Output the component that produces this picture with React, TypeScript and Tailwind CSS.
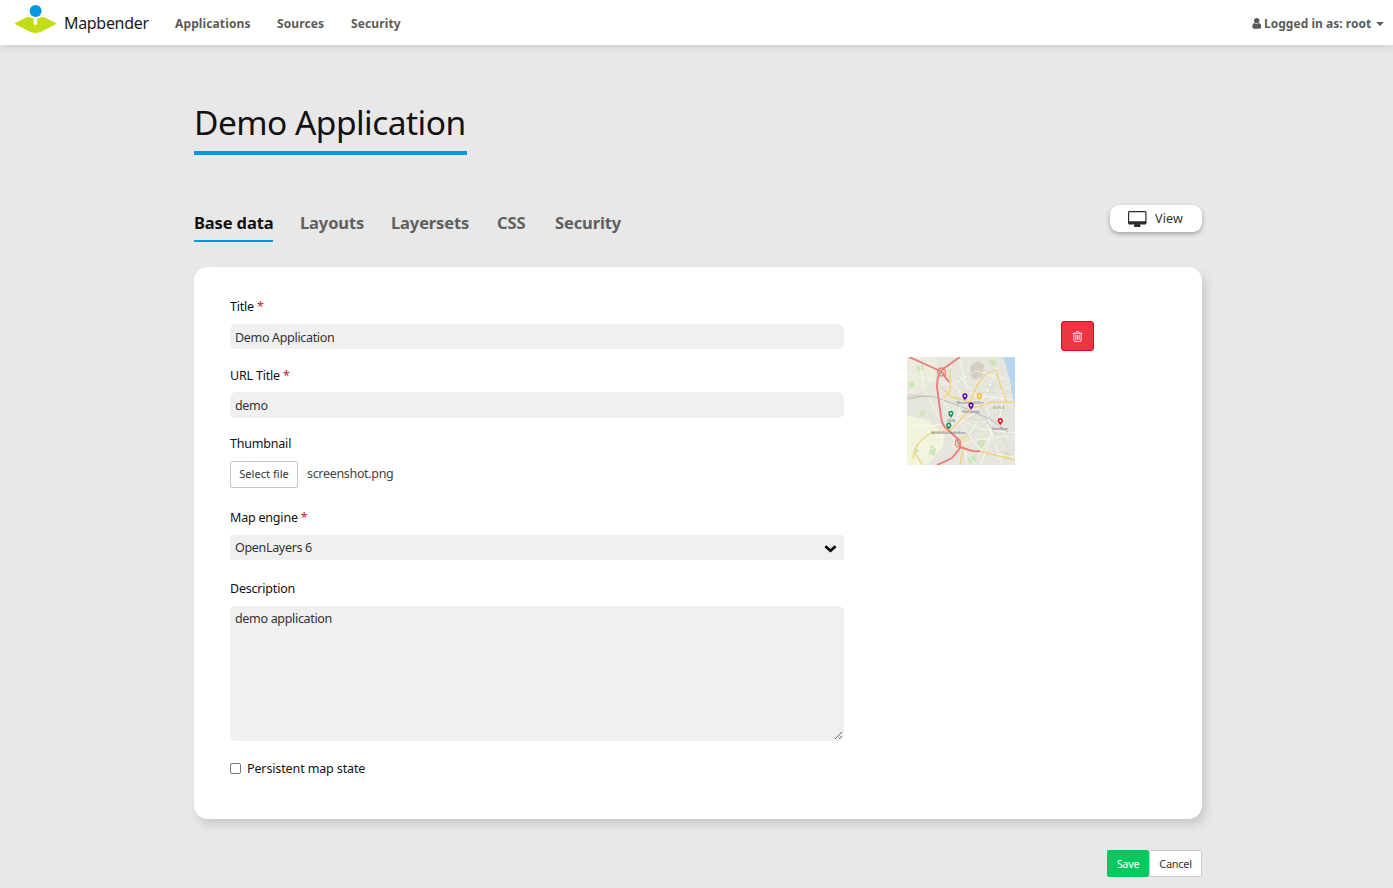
import type { ReactNode } from "react";

function Logo() {
  return (
    <svg className="h-[29px] w-[42px]" viewBox="0 0 42 29">
      <path
        d="M1 17.400 12.500 12q1-.5 2-.1 1.800 1.300 4.200 1.800v4.500a1.800 1.800 0 0 0 3.600 0v-4.500q2.400-.5 4.200-1.800 1-.4 2 .1L40 17.400q1.800 1.100 0 2.300L27.500 26q-7 4-14 0L1 19.700q-1.800-1.200 0-2.300Z"
        fill="#c3dc15"
      />
      <circle cx="20.6" cy="6" r="6" fill="#0098e5" />
    </svg>
  );
}

function UserIcon() {
  return (
    <svg className="mr-[2px] h-[11px] w-[10px]" viewBox="0 0 10 11" fill="#5b5b5b">
      <path d="M2.400 5C.9 5.300.3 6.600.3 8.700c0 1.200.8 2 1.900 2h5.100c1.100 0 1.900-.8 1.900-2C9.200 6.600 8.600 5.300 7.100 5a3.400 3.400 0 0 1-4.700 0Z" />
      <circle cx="4.750" cy="2.800" r="2.700" />
    </svg>
  );
}

function DesktopIcon() {
  return (
    <svg className="h-[16px] w-[19px]" viewBox="0 0 19 16" fill="#2c2c2c">
      <path
        fillRule="evenodd"
        d="M1.500 0h15.500A1.500 1.500 0 0 1 18.500 1.500v10.500a1.500 1.500 0 0 1-1.500 1.500h-5c0 .8.600 1.200.600 1.800 0 .4-.2.7-.6.7H6.500c-.4 0-.6-.3-.6-.7 0-.6.600-1 .6-1.800h-5A1.500 1.500 0 0 1 0 12V1.500A1.500 1.500 0 0 1 1.500 0Zm0 1.200c-.2 0-.3.1-.3.3v8.500c0 .2.1.3.3.3h15.500c.2 0 .3-.1.3-.3V1.500c0-.2-.1-.3-.3-.3Z"
      />
    </svg>
  );
}

function TrashIcon() {
  return (
    <svg className="h-[11px] w-[11px]" viewBox="0 0 11 12" fill="none" stroke="#fff" strokeWidth="1">
      <path d="M0.200 2.500h10.600M3.500 2.300l.6-1.500q.1-.3.4-.3h2q.3 0 .4.3l.6 1.500M1.500 2.500v7.700q0 1.200 1 1.200h6q1 0 1-1.200V2.500M3.700 4.300v5.300M5.500 4.300v5.300M7.300 4.300v5.300" />
    </svg>
  );
}

const PINS = [
  { x: 57.9, y: 43.500, color: "#5b05b4" },
  { x: 64, y: 52.800, color: "#5b05b4" },
  { x: 72.300, y: 43.200, color: "#f8bd12" },
  { x: 43.900, y: 61, color: "#16955f" },
  { x: 41.800, y: 72.800, color: "#16955f" },
  { x: 93.300, y: 68.300, color: "#f00d18" },
];

const PLACES = [
  { x: 63, y: 47.300, name: "WissenschaftUDez" },
  { x: 64, y: 56.300, name: "Metropolital" },
  { x: 44, y: 65, name: "GIUB" },
  { x: 41.500, y: 77, name: "Bundeskunsthalle Bonn" },
  { x: 93, y: 72.500, name: "Stadt Bonn" },
];

function MapThumbnail() {
  return (
    <svg className="block h-[108px] w-[108px]" viewBox="0 0 108 108">
      <rect width="108" height="108" fill="#e7e6de" />
      <path d="M0 58 20 63 37 76 36 90 20 108H0Z" fill="#f2f4dd" />
      <path d="M0 0h30L28 25 17 34 0 38Z" fill="#ebecdc" />
      <path d="M96 0h12v51q-2-10-4-20Q101 13 96 0Z" fill="#b4d7ef" />
      <path d="M64 8l7-4 6 4-1 11-9 4-4-6Z" fill="#d6cec2" />
      <g fill="#cde6b8">
        <path d="M9 10l7-3 1 5-6 3ZM1 26l5-2 2 5-5 2ZM24 88l5 3-1 8-6-2ZM13 53l6 2-2 4-5-1ZM60 100l8-2 2 6-7 3ZM72 81l7 3-4 7-5-4ZM82 4l5-2 3 5-5 3ZM8 91l4 2-2 5-4-2ZM49 39l4 2-3 3ZM98 94l6 3-4 5-4-3ZM79 30l8-2-2 3Z" />
        <path d="M52 80l9-3 3 7-8 5Z" fill="#f0e2b8" />
      </g>
      <g fill="none" stroke="#faf9f5" strokeWidth="0.800">
        <path d="M0 17l28 6 16 5 25-14 34 9M12 0l5 33 22 40 30 35M38 55l35 17 35 4M0 100l30-10 20-31 30-14 25-18M52 0l8 32 23 40 12 36M43 8l25 30 38 5M70 66 57 85 60 108M35 43l40 52 33 5M90 11 79 38 65 58 40 74M0 67l25 2 15-3M45 90l24-7 33-4M12 108l8-20 18-15M68 38l13 14 3 26-10 30M96 36l-4 32-20 30M46 23l9 17-5 23" />
      </g>
      <g fill="none" stroke="#d4d3cd" strokeWidth="0.500">
        <path d="M45 10l18 28 27 31 14 30M32 14l26 20 43 3M38 58l35 5 30-10M55 83l30-20 18 2M66 81l15 17 26-6M47 44l25 13 30 31M75 20l17 24-6 50M8 45l15 14 20 10M54 92l15-35 18-30M40 85l18-22 28-12M81 25l24 12M59 19l16-7 18 8" />
      </g>
      <path d="M0 41q15-3 28-1l35 13 20 9 18 13" fill="none" stroke="#b9b8b5" strokeWidth="0.900" />
      <path d="M0 38l22 1M0 43l16-4M63 53l14 7 12 18" fill="none" stroke="#c5c4bf" strokeWidth="0.700" />
      <g fill="none" stroke="#f3d478" strokeWidth="1.300">
        <path d="M108 45H84l-10 4-10 2-15 17-7 6-15 1Q12 82 8 92l-2 10M34 30l10 10 20 5q5-20 15-28l10-4 4 14 7 19M43 12v22l-6 7M7 95l9 13M72 94l36 9M57 88l-4 20" />
      </g>
      <g fill="none" stroke="#ee7d7a" strokeWidth="1.900">
        <path d="M2 0l29 13 4 3 7 9M53 0 36 12q-6 5-6 18l4 30q1 9 7 13l10 9 2 9-8 10-15 7M53 90l9 3q5 2 11 1" />
        <path d="M31 12l8 7M49 82l5 8" strokeWidth="1.400" />
        <ellipse cx="34.500" cy="15" rx="4" ry="4" strokeWidth="1.300" />
        <ellipse cx="51" cy="86" rx="2.500" ry="4" strokeWidth="1.200" />
      </g>
      <path d="M32 15h2M35 17l2-2M51 84v4" stroke="#a8c49a" strokeWidth="1.500" />
      {PLACES.map((place) => (
        <text
          key={place.name}
          x={place.x}
          y={place.y}
          textAnchor="middle"
          fontSize="3.700"
          fill="#77777c"
        >
          {place.name}
        </text>
      ))}
      <text x="92" y="52" textAnchor="middle" fontSize="3.200" fill="#8a8a86" letterSpacing="0.700">
        BONN
      </text>
      {PINS.map((pin) => (
        <g key={`${pin.x}-${pin.y}`} transform={`translate(${pin.x} ${pin.y})`}>
          <path d="M0 0C-.5-1.500-2.600-2.600-2.600-4.600a2.600 2.600 0 0 1 5.200 0C2.600-2.600.5-1.500 0 0Z" fill={pin.color} />
          <circle cx="0" cy="-4.500" r="1.100" fill="#fff" />
        </g>
      ))}
    </svg>
  );
}

function Label({ children, required = false }: { children: ReactNode; required?: boolean }) {
  return (
    <div className="h-[18px] text-[12.5px] leading-[18px] tracking-[-0.016em] text-[#111]">
      {children}
      {required && <span className="text-[#cf1127]"> *</span>}
    </div>
  );
}

const NAV = [
  { name: "Applications", width: "w-[75px]" },
  { name: "Sources", width: "w-[47px]" },
  { name: "Security", width: "w-[51px]" },
];

const TABS = [
  { name: "Base data", width: "w-[79px]" },
  { name: "Layouts", width: "w-[64px]" },
  { name: "Layersets", width: "w-[79px]" },
  { name: "CSS", width: "w-[31px]" },
  { name: "Security", width: "w-[68px]" },
];

export default function App() {
  return (
    <div className="flex h-[888px] w-full flex-col overflow-hidden whitespace-nowrap bg-[#e8e8e8] font-['Noto_Sans',sans-serif] tracking-[-0.02em] text-[#333]">
      <header className="flex h-[45px] shrink-0 items-center bg-white pr-[9px] pl-[15px] text-[12px] font-bold text-[#5b5b5b] shadow-[0_2px_8px_rgba(0,0,0,0.12)]">
        <div className="-mt-[6px] flex">
          <Logo />
        </div>
        <span className="ml-[7px] w-[84px] pt-px text-[16px] font-normal text-[#1a1a1a]">Mapbender</span>
        <nav className="ml-[27px] flex gap-[27px] pt-[2px] tracking-[0.010em]">
          {NAV.map((item) => (
            <a key={item.name} className={item.width}>
              {item.name}
            </a>
          ))}
        </nav>
        <div className="ml-auto flex items-center pt-[2px]">
          <UserIcon />
          <span className="w-[107px]">
            <span className="tracking-[0.002em]">Logged in as: root</span>
          </span>
          <span className="ml-[5px] border-x-4 border-t-4 border-x-transparent border-t-[#5b5b5b]" />
        </div>
      </header>

      <main className="ml-[194px] flex w-[1008px] flex-col">
        <h1 className="mt-[55px] h-[55px] w-[273px] border-b-4 border-[#0098e5] text-[33.5px] leading-[45px] tracking-[-0.016em] text-[#111]">
          Demo Application
        </h1>

        <div className="mt-[50px] flex h-[37px] items-start justify-between">
          <nav className="flex gap-[27px] pt-[4px] text-[16.500px] font-bold leading-[28px] tracking-[-0.008em]">
            {TABS.map((tab, i) => (
              <a
                key={tab.name}
                className={`${tab.width} h-[33px] ${i === 0 ? "border-b-2 border-[#0098e5] text-[#111]" : "text-[#5f5f5f]"}`}
              >
                {tab.name}
              </a>
            ))}
          </nav>
          <button className="flex h-[27px] w-[92px] items-center rounded-[9px] bg-white pl-[18px] text-[12.500px] tracking-[0.010em] shadow-[0_2px_4px_rgba(0,0,0,0.3)]">
            <DesktopIcon />
            <span className="ml-[8px] pt-px">View</span>
          </button>
        </div>

        <section className="mt-[25px] flex h-[552px] rounded-[14px] bg-white px-[36px] pt-[31px] shadow-[4px_6px_10px_rgba(0,0,0,0.13)]">
          <div className="flex w-[614px] flex-col text-[12.500px]">
            <Label required>Title</Label>
            <div className="mt-[8px] h-[25px] rounded-[6px] bg-[#f0f0f0] pl-[5px] leading-[27px]">Demo Application</div>
            <div className="mt-[18px]">
              <Label required>URL Title</Label>
            </div>
            <div className="mt-[7px] h-[26px] rounded-[6px] bg-[#f0f0f0] pl-[5px] leading-[27px]">demo</div>
            <div className="mt-[17px]">
              <Label>Thumbnail</Label>
            </div>
            <div className="mt-[8px] flex h-[27px] items-center">
              <button className="h-[27px] w-[68px] rounded-[2px] border border-[#c8c8c8] bg-white pb-[2px] text-[11px] leading-[23px] tracking-[0.005em]">
                Select file
              </button>
              <span className="ml-[9px] text-[#444]">screenshot.png</span>
            </div>
            <div className="mt-[21px]">
              <Label required>Map engine</Label>
            </div>
            <div className="mt-[8px] flex h-[25px] items-center justify-between rounded-[3px] bg-[#f0f0f0] pr-[7px] pl-[5px]">
              <span className="pt-px">OpenLayers 6</span>
              <svg className="mt-px h-[9px] w-[13px]" viewBox="0 0 13 9" fill="none" stroke="#000" strokeWidth="2.600">
                <path d="m1.400 2.200 5.100 4.600 5.100-4.600" />
              </svg>
            </div>
            <div className="mt-[20px]">
              <Label>Description</Label>
            </div>
            <div className="mt-[8px] flex h-[135px] items-start justify-between rounded-[6px] bg-[#f0f0f0] pt-[4px] pr-px pl-[5px] leading-[18px]">
              <span>demo application</span>
              <svg className="mb-px h-[9px] w-[9px] self-end" viewBox="0 0 9 9" stroke="#555" strokeWidth="0.900">
                <path d="M1 8 8 1M5 8l3-3" />
              </svg>
            </div>
            <div className="mt-[18px] flex h-[18px] items-center">
              <span className="h-[11px] w-[11px] rounded-[2px] border border-[#767676] bg-white" />
              <span className="ml-[6px] pt-[2px] tracking-[-0.010em] text-[#111]">Persistent map state</span>
            </div>
          </div>

          <div className="ml-[63px] flex w-[187px] flex-col pt-[23px]">
            <button className="flex h-[30px] w-[33px] items-center justify-center self-end rounded-[3px] border border-[#e20020] bg-[#ec3540]">
              <TrashIcon />
            </button>
            <div className="mt-[6px]">
              <MapThumbnail />
            </div>
          </div>
        </section>

        <div className="mt-[31px] flex justify-end text-[11px]">
          <button className="h-[27px] w-[42px] rounded-[2px] bg-[#05c95f] pt-px text-white">Save</button>
          <button className="h-[27px] w-[53px] rounded-[2px] border border-[#ccc] bg-white pt-px">Cancel</button>
        </div>
      </main>
    </div>
  );
}
